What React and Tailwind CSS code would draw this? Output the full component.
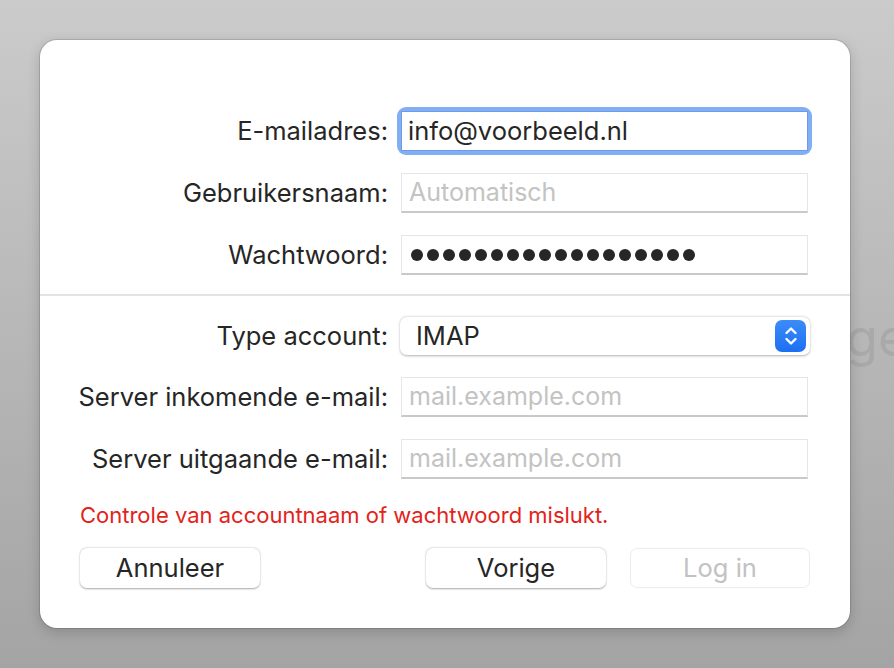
import React from 'react';

const font = { fontFamily: 'Inter, "Noto Sans", sans-serif' };

const Field = ({ label, children }) => (
  <div className="flex items-center h-[40px]">
    <div className="w-[349px] pr-[1px] text-right text-[25.5px] text-[#262626] leading-none whitespace-nowrap">{label}</div>
    <div className="ml-[12px]">{children}</div>
  </div>
);

const TextBox = ({ value, placeholder }) => (
  <div className="w-[407px] h-[40px] bg-white border border-[#e6e6e6] border-b-[#c9c9c9] border-b-2 flex items-center pl-[7px] text-[25px] leading-none">
    {value ? <span className="text-[#262626]">{value}</span> : <span className="text-[#c3c3c3]">{placeholder}</span>}
  </div>
);

const Button = ({ children, disabled }) => (
  <button
    className={`w-[180px] h-[40px] rounded-[7px] bg-white text-[25.5px] leading-none ${
      disabled
        ? 'text-[#c2c2c2] border border-[#ececec]'
        : 'text-[#262626] shadow-[0_0.5px_2px_rgba(0,0,0,0.35)]'
    }`}
  >
    {children}
  </button>
);

export default function App() {
  return (
    <div
      className="relative w-[894px] h-[668px] overflow-hidden bg-gradient-to-b from-[#cbcbcb] to-[#a4a4a4]"
      style={font}
    >
      {/* text of the window behind */}
      <div className="absolute left-[846px] top-[312px] text-[52px] text-[#a9a9a9] leading-none">ge</div>

      <div className="relative ml-[40px] mt-[40px] w-[810px] h-[588px] bg-white rounded-[17px] shadow-[0_0_0_1px_rgba(0,0,0,0.12),0_4px_14px_rgba(0,0,0,0.18)] pt-[71px]">
        <div className="flex flex-col gap-[22px]">
          <Field label="E-mailadres:">
            <div className="rounded-[5px] ring-4 ring-[#82aef3]">
              <div className="w-[407px] h-[40px] bg-white border border-[#6d9be6] flex items-center pl-[6px] text-[25.5px] text-[#262626] leading-none">
                info@voorbeeld.nl
              </div>
            </div>
          </Field>
          <Field label="Gebruikersnaam:">
            <TextBox placeholder="Automatisch" />
          </Field>
          <Field label="Wachtwoord:">
            <div className="w-[407px] h-[40px] bg-white border border-[#e6e6e6] border-b-[#c9c9c9] border-b-2 flex items-center pl-[9px] gap-[4px]">
              {Array.from({ length: 18 }).map((_, i) => (
                <span key={i} className="w-[12px] h-[12px] rounded-full bg-[#262626]" />
              ))}
            </div>
          </Field>
        </div>

        <div className="mt-[19px] h-[2px] bg-[#e3e3e3]" />

        <div className="mt-[21px] flex flex-col gap-[22px]">
          <div className="flex items-center h-[38px]">
            <div className="w-[349px] pr-[1px] text-right text-[25.5px] text-[#262626] leading-none">Type account:</div>
            <div className="ml-[11px] w-[410px] h-[38px] rounded-[7px] bg-white shadow-[0_0.5px_2.5px_rgba(0,0,0,0.3)] flex items-center justify-between pl-[16px] pr-[4px] text-[25.5px] text-[#262626] leading-none">
              <span>IMAP</span>
              <span className="w-[31px] h-[32px] rounded-[7px] bg-gradient-to-b from-[#3b8cf8] to-[#1b6ff2] flex items-center justify-center">
                <svg width="14" height="22" viewBox="0 0 14 22" fill="none" stroke="white" strokeWidth="2.4" strokeLinecap="round" strokeLinejoin="round">
                  <path d="M2.5 8 L7 3.5 L11.5 8" />
                  <path d="M2.5 14 L7 18.5 L11.5 14" />
                </svg>
              </span>
            </div>
          </div>
          <Field label="Server inkomende e-mail:">
            <TextBox placeholder="mail.example.com" />
          </Field>
          <Field label="Server uitgaande e-mail:">
            <TextBox placeholder="mail.example.com" />
          </Field>
        </div>

        <div className="mt-[25px] pl-[40px] text-[22px] text-[#e2231a] leading-none">
          Controle van accountnaam of wachtwoord mislukt.
        </div>

        <div className="mt-[22px] flex items-center px-[40px]">
          <Button>Annuleer</Button>
          <div className="flex-1" />
          <Button>Vorige</Button>
          <div className="w-[24px]" />
          <Button disabled>Log in</Button>
        </div>
      </div>
    </div>
  );
}
